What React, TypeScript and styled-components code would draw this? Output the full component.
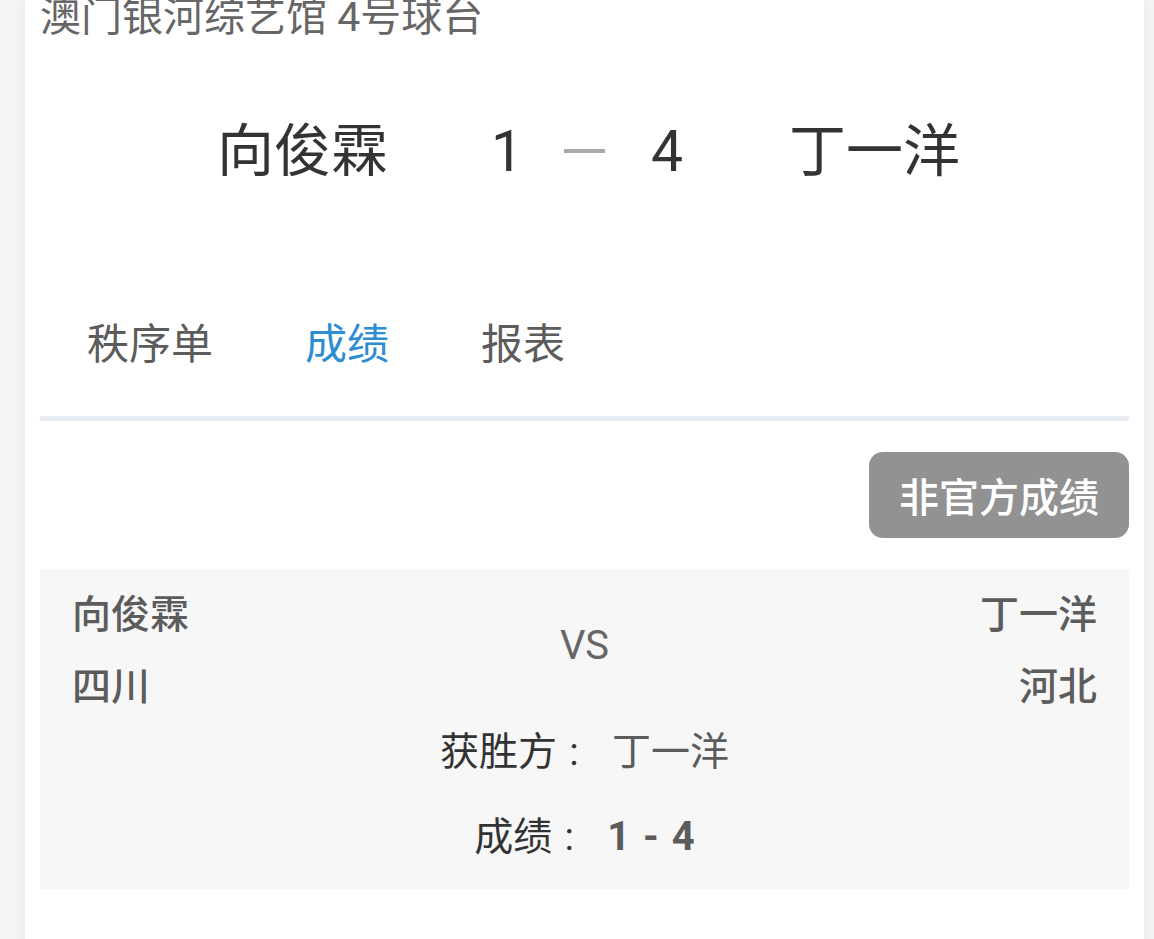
import styled, { createGlobalStyle } from "styled-components";

const GlobalStyle = createGlobalStyle`
    body {
        margin: 0;
        background: #f4f4f4;
        font-family: Roboto, "Noto Sans CJK SC", sans-serif;
        overflow: hidden;
    }
`;

const Page = styled.div`
    padding: 0 10px 0 25px;
`;

const Card = styled.div`
    display: flow-root;
    min-height: 960px;
    padding: 0 15px;
    background: #fff;
    box-shadow: 0 0 14px rgba(0, 0, 0, 0.05);
    box-sizing: border-box;
`;

const Venue = styled.div`
    margin-top: -3px;
    font-size: 41px;
    line-height: 41px;
    color: #666;
`;

const ScoreRow = styled.div`
    height: 226px;
    display: grid;
    grid-template-columns: 1fr 41px 1fr;
    align-items: center;
    color: #333;
    font-size: 57px;
    line-height: 1;
`;

const Half = styled.div<{ $right?: boolean }>`
    display: flex;
    align-items: center;
    justify-content: ${(p) => (p.$right ? "flex-start" : "flex-end")};
    gap: ${(p) => (p.$right ? "106px" : "103px")};
    padding: ${(p) => (p.$right ? "0 0 0 46px" : "0 41px 0 0")};
`;

const Dash = styled.span`
    height: 4px;
    background: #aaa;
`;

const TabBar = styled.div`
    height: 152px;
    display: flex;
    align-items: center;
`;

const Tab = styled.div<{ $active?: boolean }>`
    padding: 0 46px;
    font-size: 42px;
    color: ${(p) => (p.$active ? "#2d8dd3" : "#5c5c5c")};
    &:first-child {
        padding-left: 47px;
    }
`;

const Divider = styled.div`
    height: 5px;
    background: #e9eef5;
`;

const Toolbar = styled.div`
    display: flex;
    justify-content: flex-end;
    padding: 31px 0;
`;

const Badge = styled.button`
    height: 86px;
    padding: 0 30px;
    border: none;
    border-radius: 14px;
    background: #929292;
    color: #fff;
    font-family: inherit;
    font-size: 40px;
    font-weight: 500;
`;

const ResultBox = styled.div`
    background: #f7f7f7;
    padding: 10px 32px 23px;
`;

const Teams = styled.div`
    display: grid;
    grid-template-columns: 1fr auto 1fr;
    align-items: center;
`;

const Side = styled.div<{ $right?: boolean }>`
    text-align: ${(p) => (p.$right ? "right" : "left")};
    font-size: 39px;
    font-weight: 500;
    line-height: 72px;
    color: #5c5c5c;
`;

const Versus = styled.div`
    padding-bottom: 12px;
    font-size: 40px;
    color: #666;
`;

const Lines = styled.div`
    display: flex;
    flex-direction: column;
    gap: 27px;
`;

const Line = styled.div`
    display: flex;
    justify-content: center;
    align-items: baseline;
    font-size: 39px;
    line-height: 58px;
    color: #333;
`;

const Colon = styled.span`
    width: 40px;
    text-align: center;
    margin-left: -3px;
`;

const Value = styled.span<{ $bold?: boolean }>`
    margin-left: 18px;
    color: #5c5c5c;
    font-size: ${(p) => (p.$bold ? "40px" : "inherit")};
    font-weight: ${(p) => (p.$bold ? 700 : 400)};
    word-spacing: ${(p) => (p.$bold ? "3px" : "0")};
`;

const match = {
    venue: "澳门银河综艺馆 4号球台",
    home: { name: "向俊霖", team: "四川", score: 1 },
    away: { name: "丁一洋", team: "河北", score: 4 },
};

const tabs = ["秩序单", "成绩", "报表"];

const App = () => {
    const { home, away } = match;
    const winner = home.score > away.score ? home : away;

    return (
        <Page>
            <GlobalStyle />
            <Card>
                <Venue>{match.venue}</Venue>
                <ScoreRow>
                    <Half>
                        <span>{home.name}</span>
                        <span>{home.score}</span>
                    </Half>
                    <Dash />
                    <Half $right>
                        <span>{away.score}</span>
                        <span>{away.name}</span>
                    </Half>
                </ScoreRow>
                <TabBar>
                    {tabs.map((t) => (
                        <Tab key={t} $active={t === "成绩"}>
                            {t}
                        </Tab>
                    ))}
                </TabBar>
                <Divider />
                <Toolbar>
                    <Badge>非官方成绩</Badge>
                </Toolbar>
                <ResultBox>
                    <Teams>
                        <Side>
                            <div>{home.name}</div>
                            <div>{home.team}</div>
                        </Side>
                        <Versus>VS</Versus>
                        <Side $right>
                            <div>{away.name}</div>
                            <div>{away.team}</div>
                        </Side>
                    </Teams>
                    <Lines>
                        <Line>
                            <span>获胜方</span>
                            <Colon>:</Colon>
                            <Value>{winner.name}</Value>
                        </Line>
                        <Line>
                            <span>成绩</span>
                            <Colon>:</Colon>
                            <Value $bold>
                                {home.score} - {away.score}
                            </Value>
                        </Line>
                    </Lines>
                </ResultBox>
            </Card>
        </Page>
    );
};

export default App;
